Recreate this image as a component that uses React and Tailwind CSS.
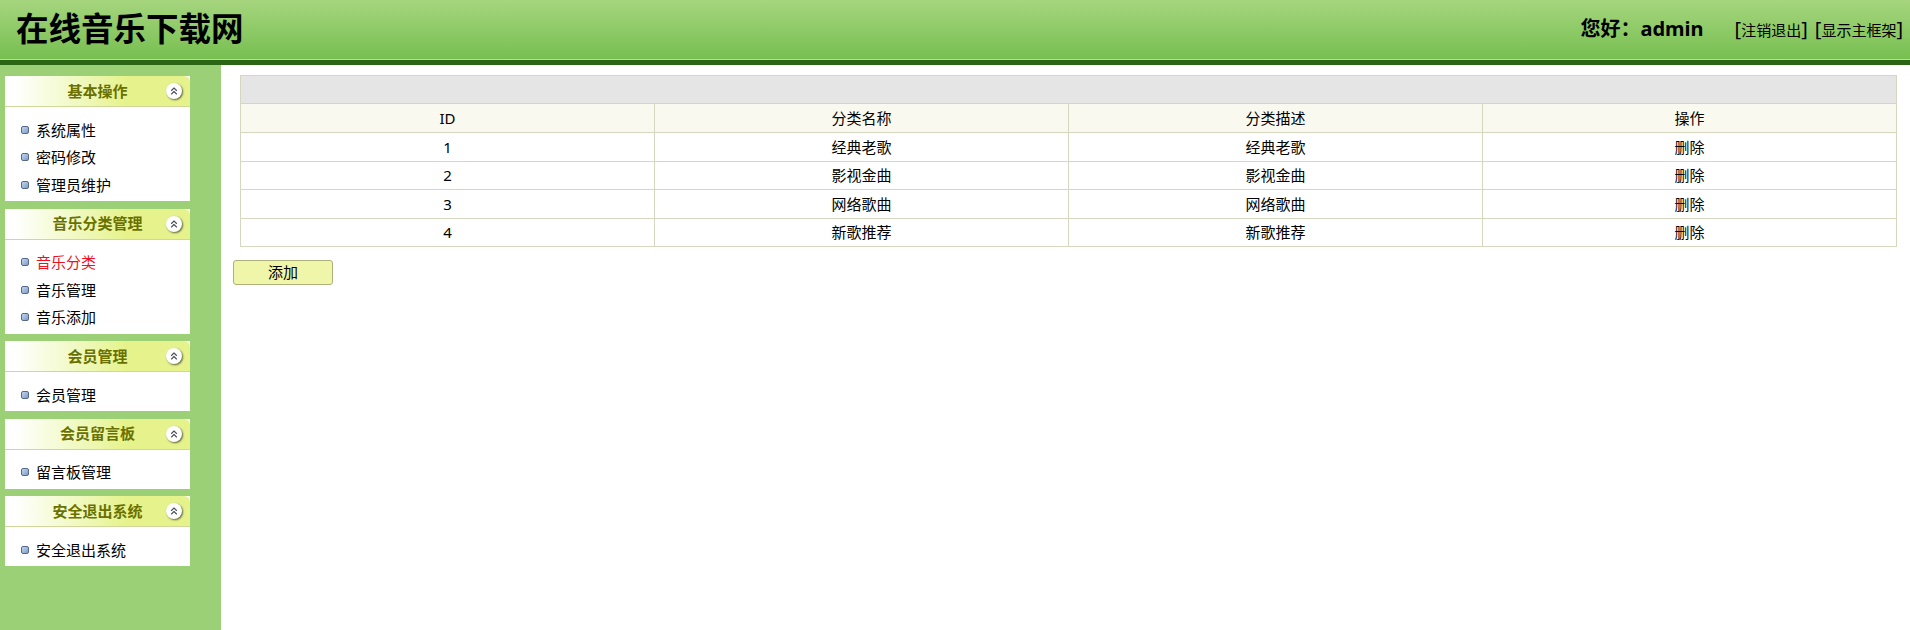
import { ChevronsUp } from 'lucide-react';

const font = { cn: '"Noto Sans", "Noto Sans CJK SC", sans-serif' };

const menus = [
  { title: '基本操作', items: ['系统属性', '密码修改', '管理员维护'] },
  { title: '音乐分类管理', items: ['音乐分类', '音乐管理', '音乐添加'] },
  { title: '会员管理', items: ['会员管理'] },
  { title: '会员留言板', items: ['留言板管理'] },
  { title: '安全退出系统', items: ['安全退出系统'] },
];

const rows = [
  [1, '经典老歌'],
  [2, '影视金曲'],
  [3, '网络歌曲'],
  [4, '新歌推荐'],
];

function MenuCard({ title, items }) {
  return (
    <div className="w-[185px] bg-white">
      <div className="relative flex h-[31px] items-center justify-center rounded-t-[6px] border-b border-[#cfd79a] bg-gradient-to-r from-white from-5% to-[#e6f38c] to-65%">
        <span className="text-[15px] font-bold text-[#6a7100]">{title}</span>
        <span className="absolute right-[8px] top-[7px] flex h-[16px] w-[16px] items-center justify-center rounded-full bg-white shadow-[1px_1px_2px_rgba(0,0,0,0.6)]">
          <ChevronsUp size={12} strokeWidth={2.25} className="text-[#4a515c]" />
        </span>
      </div>
      <ul className="pb-[2.5px] pt-[9px]">
        {items.map((item) => (
          <li key={item} className="flex h-[27.5px] items-center pl-[16px] text-[15px] text-black">
            <span className="mr-[7px] h-[8px] w-[8px] rounded-[2px] border border-[#566a88] bg-gradient-to-br from-[#c3d5ee] to-[#7f9cc6]" />
            <span className={item === '音乐分类' ? 'text-[#ee1122]' : ''}>{item}</span>
          </li>
        ))}
      </ul>
    </div>
  );
}

export default function App() {
  return (
    <div className="flex h-[630px] flex-col overflow-hidden bg-white" style={{ fontFamily: font.cn }}>
      <header className="flex h-[65px] shrink-0 items-center justify-between border-b-[5px] border-[#2b6614] bg-gradient-to-b from-[#a6d57e] to-[#75bf4e] pb-[2px] pl-[16px] pr-[7px] shadow-[inset_0_-1px_0_#b5e28f]">
        <h1 className="text-[32.5px] font-bold text-black">在线音乐下载网</h1>
        <div className="flex items-center text-black">
          <span className="mr-[31px] text-[20px] font-bold">您好：admin</span>
          <span className="text-[15px]"><span className="text-[20px]">[</span>注销退出<span className="text-[20px]">]</span></span>
          <span className="ml-[7px] text-[15px]"><span className="text-[20px]">[</span>显示主框架<span className="text-[20px]">]</span></span>
        </div>
      </header>

      <div className="flex flex-1">
        <aside className="flex w-[221px] shrink-0 flex-col gap-[7.5px] bg-[#9bd077] pl-[5px] pt-[11px]">
          {menus.map((menu) => (
            <MenuCard key={menu.title} title={menu.title} items={menu.items} />
          ))}
        </aside>

        <main className="flex-1 pl-[12px] pr-[13px] pt-[10px]">
          <table className="ml-[7px] w-[1657px] table-fixed border-collapse text-center text-[15px] text-black">
            <thead>
              <tr className="h-[28px] bg-[#e5e5e5]">
                <th colSpan={4} className="border border-[#d5d8bf]" />
              </tr>
              <tr className="h-[29px] bg-[#f9f9f0]">
                {['ID', '分类名称', '分类描述', '操作'].map((head) => (
                  <th key={head} className="border border-[#d5d8bf] font-normal">{head}</th>
                ))}
              </tr>
            </thead>
            <tbody>
              {rows.map(([id, name]) => (
                <tr key={id} className="h-[28.5px]">
                  <td className="border border-[#d5d8bf]">{id}</td>
                  <td className="border border-[#d5d8bf]">{name}</td>
                  <td className="border border-[#d5d8bf]">{name}</td>
                  <td className="border border-[#d5d8bf]">删除</td>
                </tr>
              ))}
            </tbody>
          </table>
          <button className="mt-[13px] block h-[25px] w-[100px] rounded-[3px] border border-[#aeb17c] bg-[#eff6aa] text-[15px] text-black">
            添加
          </button>
        </main>
      </div>
    </div>
  );
}
